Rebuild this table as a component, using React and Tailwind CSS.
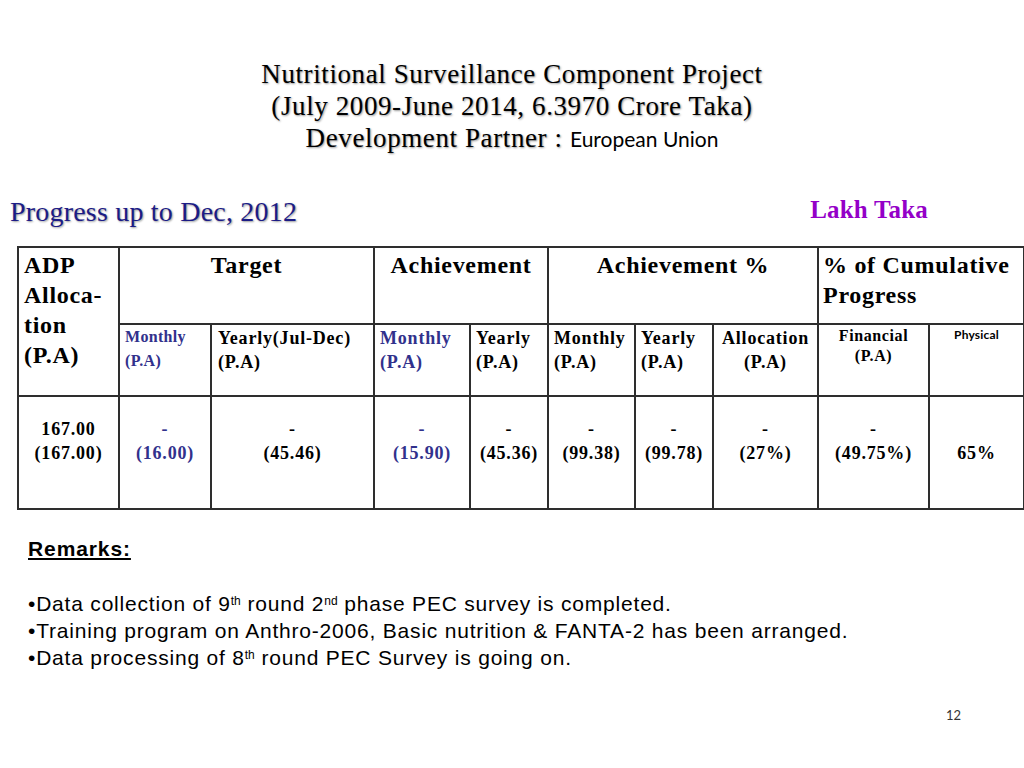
import React from 'react';

const serif = "font-['Liberation_Serif',_'Times_New_Roman',_serif]";
const shadow = '[text-shadow:1px_1px_2px_#9a9a9a]';

const dataCells = [
  { top: '167.00', bottom: '(167.00)' },
  { top: '-', bottom: '(16.00)', navy: true },
  { top: '-', bottom: '(45.46)' },
  { top: '-', bottom: '(15.90)', navy: true },
  { top: '-', bottom: '(45.36)' },
  { top: '-', bottom: '(99.38)' },
  { top: '-', bottom: '(99.78)' },
  { top: '-', bottom: '(27%)' },
  { top: '-', bottom: '(49.75%)' },
  { top: '\u00a0', bottom: '65%' },
];

export default function App() {
  const cell = 'border-2 border-[#2e2e2e] align-top';
  const sub = 'text-[18px] leading-[24px] tracking-[0.8px]';

  return (
    <div className={`relative h-[768px] w-[1024px] overflow-hidden bg-white text-black ${serif}`}>
      <div className={`flex flex-col items-center pt-[58px] text-[27px] leading-[32px] tracking-[0.6px] ${shadow}`}>
        <p>Nutritional Surveillance Component Project</p>
        <p>(July 2009-June 2014, 6.3970 Crore Taka)</p>
        <p>
          Development Partner :{' '}
          <span className="font-['Lato',_'Open_Sans',_sans-serif] text-[21px] tracking-normal [text-shadow:none]">European Union</span>
        </p>
      </div>

      <div className="mt-[42px] flex items-start justify-between pl-[10px] pr-[96px]">
        <p className={`text-[28px] leading-[30px] tracking-[0.2px] text-[#1c1c86] ${shadow}`}>Progress up to Dec, 2012</p>
        <p className="text-[25px] font-bold leading-[26px] tracking-[0.2px] text-[#9400c8]">Lakh Taka</p>
      </div>

      <table className="ml-[17px] mt-[19px] w-[1006px] table-fixed border-collapse">
        <colgroup>
          <col className="w-[101px]" />
          <col className="w-[92px]" />
          <col className="w-[163px]" />
          <col className="w-[96px]" />
          <col className="w-[78px]" />
          <col className="w-[87px]" />
          <col className="w-[78px]" />
          <col className="w-[105px]" />
          <col className="w-[111px]" />
          <col className="w-[95px]" />
        </colgroup>
        <tbody>
          <tr className="h-[77px] text-[24px] font-bold leading-[30px] tracking-[0.7px]">
            <td rowSpan={2} className={`${cell} px-[5px] pt-[2px]`}>
              ADP
              <br />
              Alloca-
              <br />
              tion
              <br />
              (P.A)
            </td>
            <td colSpan={2} className={`${cell} pt-[2px] text-center`}>Target</td>
            <td colSpan={2} className={`${cell} pt-[2px] text-center`}>Achievement</td>
            <td colSpan={3} className={`${cell} pt-[2px] text-center`}>Achievement %</td>
            <td colSpan={2} className={`${cell} px-[4px] pt-[2px]`}>
              % of Cumulative
              <br />
              Progress
            </td>
          </tr>
          <tr className="h-[72px] font-bold">
            <td className={`${cell} px-[5px] pt-0 text-[16px] leading-[24px] tracking-[0.3px] text-[#31318c]`}>
              Monthly
              <br />
              (P.A)
            </td>
            <td className={`${cell} px-[6px] pt-[1px] ${sub}`}>
              Yearly(Jul-Dec)
              <br />
              (P.A)
            </td>
            <td className={`${cell} px-[5px] pt-[1px] ${sub} text-[#31318c]`}>
              Monthly
              <br />
              (P.A)
            </td>
            <td className={`${cell} px-[5px] pt-[1px] ${sub}`}>
              Yearly
              <br />
              (P.A)
            </td>
            <td className={`${cell} px-[5px] pt-[1px] ${sub}`}>
              Monthly
              <br />
              (P.A)
            </td>
            <td className={`${cell} px-[5px] pt-[1px] ${sub}`}>
              Yearly
              <br />
              (P.A)
            </td>
            <td className={`${cell} pt-[1px] text-center ${sub}`}>
              Allocation
              <br />
              (P.A)
            </td>
            <td className={`${cell} pt-[1px] text-center text-[16px] leading-[20px] tracking-[0.6px]`}>
              Financial
              <br />
              (P.A)
            </td>
            <td className={`${cell} pt-[1px] text-center font-['Lato',_'Open_Sans',_sans-serif] text-[12px] leading-[18px] tracking-[0.2px]`}>
              Physical
            </td>
          </tr>
          <tr className="h-[113px] text-[18px] font-bold leading-[24px] tracking-[0.8px]">
            {dataCells.map((d, i) => (
              <td key={i} className={`${cell} pt-[20px] text-center ${d.navy ? 'text-[#31318c]' : ''}`}>
                {d.top}
                <br />
                {d.bottom}
              </td>
            ))}
          </tr>
        </tbody>
      </table>

      <div className="pl-[28px] pt-[25px] font-['Liberation_Sans',_Arial,_sans-serif] text-[21px] leading-[27px] tracking-[0.8px]">
        <p className="font-bold tracking-[0.9px] underline">Remarks:</p>
        <div className="mt-[28px]">
          <p>
            •Data collection of 9<sup className="text-[12px] tracking-normal">th</sup> round 2<sup className="text-[12px] tracking-normal">nd</sup> phase PEC survey is completed.
          </p>
          <p>•Training program on Anthro-2006, Basic nutrition &amp; FANTA-2 has been arranged.</p>
          <p>
            •Data processing of 8<sup className="text-[12px] tracking-normal">th</sup> round PEC Survey is going on.
          </p>
        </div>
      </div>

      <p className="absolute left-[946px] top-[706px] font-['Lato',_'Open_Sans',_sans-serif] text-[13px] text-[#333]">12</p>
    </div>
  );
}
